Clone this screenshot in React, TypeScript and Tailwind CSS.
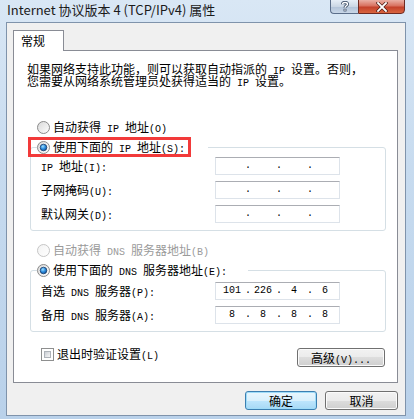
import React from 'react';

const font = "font-['Noto_Sans_CJK_SC','Liberation_Sans',sans-serif]";

// SimSun-like text: half-width runs get a 6px-per-char mono face
function T({children}: {children: string}) {
    const runs = children.match(/[\x20-\x7e]+|[^\x20-\x7e]+/g) ?? [];
    return (
        <>
            {runs.map((r, i) =>
                /^[\x20-\x7e]+$/.test(r) ? (
                    <span key={i} className="font-['Liberation_Mono',monospace] text-[10px] leading-[8px] whitespace-pre">
                        {r}
                    </span>
                ) : (
                    <span key={i}>{r}</span>
                ),
            )}
        </>
    );
}

function Radio({checked, disabled}: {checked?: boolean; disabled?: boolean}) {
    const ring = disabled ? '#c5c5c5' : '#8a8a8a';
    const id = `rg${checked ? 1 : 0}${disabled ? 1 : 0}`;
    return (
        <svg width="13" height="13" viewBox="0 0 13 13" className="shrink-0">
            <defs>
                <linearGradient id={id} x1="0" y1="0" x2="1" y2="1">
                    <stop offset="0" stopColor={disabled ? '#f2f2f2' : '#d8d8d8'} />
                    <stop offset="1" stopColor="#ffffff" />
                </linearGradient>
                <radialGradient id="dot" cx="0.4" cy="0.35" r="0.7">
                    <stop offset="0" stopColor="#9fe0ff" />
                    <stop offset="0.5" stopColor="#2f8fe0" />
                    <stop offset="1" stopColor="#0d4e96" />
                </radialGradient>
            </defs>
            <circle cx="6.5" cy="6.5" r="6" fill={`url(#${id})`} stroke={ring} />
            {checked && <circle cx="6.5" cy="6.5" r="3.3" fill="url(#dot)" stroke="#1a3e6b" strokeWidth="0.8" />}
        </svg>
    );
}

function IpField({value}: {value?: string[]}) {
    const parts = value ?? ['', '', '', ''];
    return (
        <div className="w-[125px] h-[18px] bg-white border border-[#dde3ea] border-t-[#abadb3] flex items-end pl-[3px] pb-[2px] font-['Liberation_Mono',monospace] text-[10px] leading-[12px]">
            {parts.map((p, i) => (
                <React.Fragment key={i}>
                    <span className="w-[26px] text-center">{p}</span>
                    {i < 3 && <span className="w-[5px] text-center">.</span>}
                </React.Fragment>
            ))}
        </div>
    );
}

function FieldRow({label, value}: {label: string; value?: string[]}) {
    return (
        <div className="h-[18px] flex items-center pl-[4px]">
            <div className="w-[174px] h-[14px] whitespace-nowrap leading-[14px]">
                <T>{label}</T>
            </div>
            <IpField value={value} />
        </div>
    );
}

function Label({text}: {text: string}) {
    return (
        <div className="h-[14px] leading-[14px] whitespace-nowrap">
            <T>{text}</T>
        </div>
    );
}

function WinButton({children, focused, w}: {children: React.ReactNode; focused?: boolean; w: string}) {
    return (
        <button
            type="button"
            className={`${w} h-[19px] rounded-[3px] border text-[12px] leading-[15px] text-black ${
                focused
                    ? 'border-[#3c7fb1] shadow-[inset_0_0_0_1px_#9fdcf8] bg-[linear-gradient(#eaf6fd_0%,#d9f0fc_50%,#bee6fd_50%,#a7d9f5_100%)]'
                    : 'border-[#707070] shadow-[inset_0_0_0_1px_#fbfbfb] bg-[linear-gradient(#f2f2f2_0%,#ebebeb_50%,#dddddd_50%,#cfcfcf_100%)]'
            }`}
        >
            {children}
        </button>
    );
}

export default function App() {
    return (
        <div
            className={`w-[414px] h-[419px] overflow-hidden flex flex-col text-[12px] text-black ${font} bg-[linear-gradient(180deg,#d9e7f5_0%,#c7dbef_40%,#b9d1ea_100%)]`}
        >
            {/* title bar */}
            <div className="h-[22px] flex items-start shrink-0">
                <span className="ml-[7px] mt-[2px] text-[13px] leading-[16px] text-[#1b1b1b] whitespace-nowrap">
                    Internet 协议版本 4 (TCP/IPv4) 属性
                </span>
                <div className="ml-auto mr-[9px] flex -mt-px">
                    <div className="w-[28px] h-[15px] border border-[#5b6e8a] border-r-0 rounded-bl-[4px] bg-[linear-gradient(#e6eef7_0%,#cbd7e5_50%,#b3c4d9_55%,#c9d7e8_100%)] flex items-center justify-center">
                        <svg width="8" height="11" viewBox="0 0 8 11">
                            <path
                                d="M1.5 3.2 C1.5 0.9 6.5 0.9 6.5 3.2 C6.5 4.8 4 4.8 4 6.8"
                                fill="none"
                                stroke="#3b4d66"
                                strokeWidth="3"
                            />
                            <path
                                d="M1.5 3.2 C1.5 0.9 6.5 0.9 6.5 3.2 C6.5 4.8 4 4.8 4 6.8"
                                fill="none"
                                stroke="#ffffff"
                                strokeWidth="1.4"
                            />
                            <rect x="2.6" y="7.8" width="2.8" height="2.6" fill="#3b4d66" />
                            <rect x="3.3" y="8.4" width="1.4" height="1.3" fill="#ffffff" />
                        </svg>
                    </div>
                    <div className="w-[47px] h-[15px] border border-[#6e2a22] rounded-br-[4px] bg-[linear-gradient(#eab0a5_0%,#d8715f_45%,#c4412b_55%,#d8653f_100%)] flex items-center justify-center">
                        <svg width="12" height="10" viewBox="0 0 12 10">
                            <path d="M2 1 L10 9 M10 1 L2 9" stroke="#4a1a14" strokeWidth="3.2" strokeLinecap="square" />
                            <path d="M2 1 L10 9 M10 1 L2 9" stroke="#ffffff" strokeWidth="1.8" strokeLinecap="square" />
                        </svg>
                    </div>
                </div>
            </div>

            {/* client area */}
            <div className="ml-[6px] mr-[8px] mb-[3px] flex-1 bg-[#f0f0f0] border border-[#7f93ab] pl-[6px] pt-[7px] flex flex-col">
                <div className="flex">
                    <div className="relative z-10 w-[51px] h-[21px] -mb-px bg-white border border-[#898c95] border-b-0 pl-[7px] pt-[2px] leading-[16px]">
                        常规
                    </div>
                </div>
                <div className="w-[385px] h-[333px] bg-white border border-[#898c95] flex flex-col">
                    <div className="mt-[12px] ml-[13px] flex flex-col">
                        <div className="h-[12px] leading-[12px] whitespace-nowrap">
                            <T>如果网络支持此功能，则可以获取自动指派的 IP 设置。否则，</T>
                        </div>
                        <div className="h-[12px] leading-[12px] whitespace-nowrap">
                            <T>您需要从网络系统管理员处获得适当的 IP 设置。</T>
                        </div>
                    </div>

                    <div className="mt-[30px] ml-[23px] h-[20px] flex items-center gap-[3px]">
                        <Radio />
                        <Label text="自动获得 IP 地址(O)" />
                    </div>

                    <fieldset className="ml-[16px] w-[356px] border border-[#d5dfe5] rounded-[3px] pl-[6px] pr-0 pb-[7px] m-0">
                        <legend className="w-[171px] h-[20px] p-0">
                            <div className="relative h-[20px] flex items-center gap-[3px]">
                                <Radio checked />
                                <Label text="使用下面的 IP 地址(S):" />
                                <div className="absolute left-[-9px] top-0 w-[163px] h-[20px] border-[3px] border-[#f23a3a]" />
                            </div>
                        </legend>
                        <div className="flex flex-col gap-[6px]">
                            <FieldRow label="IP 地址(I):" />
                            <FieldRow label="子网掩码(U):" />
                            <FieldRow label="默认网关(D):" />
                        </div>
                    </fieldset>

                    <div className="mt-[9px] ml-[23px] h-[20px] flex items-center gap-[3px] text-[#9a9a9a]">
                        <Radio disabled />
                        <Label text="自动获得 DNS 服务器地址(B)" />
                    </div>

                    <fieldset className="ml-[16px] w-[356px] border border-[#d5dfe5] rounded-[3px] pl-[6px] pr-0 pb-[7px] m-0">
                        <legend className="w-[211px] h-[20px] p-0">
                            <div className="h-[20px] flex items-center gap-[3px]">
                                <Radio checked />
                                <Label text="使用下面的 DNS 服务器地址(E):" />
                            </div>
                        </legend>
                        <div className="mt-[2px] flex flex-col gap-[6px]">
                            <FieldRow label="首选 DNS 服务器(P):" value={['101', '226', '4', '6']} />
                            <FieldRow label="备用 DNS 服务器(A):" value={['8', '8', '8', '8']} />
                        </div>
                    </fieldset>

                    <div className="mt-[12px] h-[20px] flex items-center justify-between pl-[27px] pr-[12px]">
                        <div className="flex items-center gap-[3px]">
                            <div className="w-[13px] h-[13px] border border-[#8e8f8f] p-[2px] bg-white">
                                <div className="w-full h-full bg-[linear-gradient(135deg,#cbcfd5,#f6f6f6)] border border-[#aeb3b9]" />
                            </div>
                            <Label text="退出时验证设置(L)" />
                        </div>
                        <div className="mt-[7px]">
                            <WinButton w="w-[88px]">
                                <T>高级(V)...</T>
                            </WinButton>
                        </div>
                    </div>
                </div>

                <div className="w-[385px] mt-[8px] flex justify-end gap-[8px]">
                    <WinButton w="w-[72px]" focused>
                        确定
                    </WinButton>
                    <WinButton w="w-[73px]">取消</WinButton>
                </div>
            </div>
        </div>
    );
}
